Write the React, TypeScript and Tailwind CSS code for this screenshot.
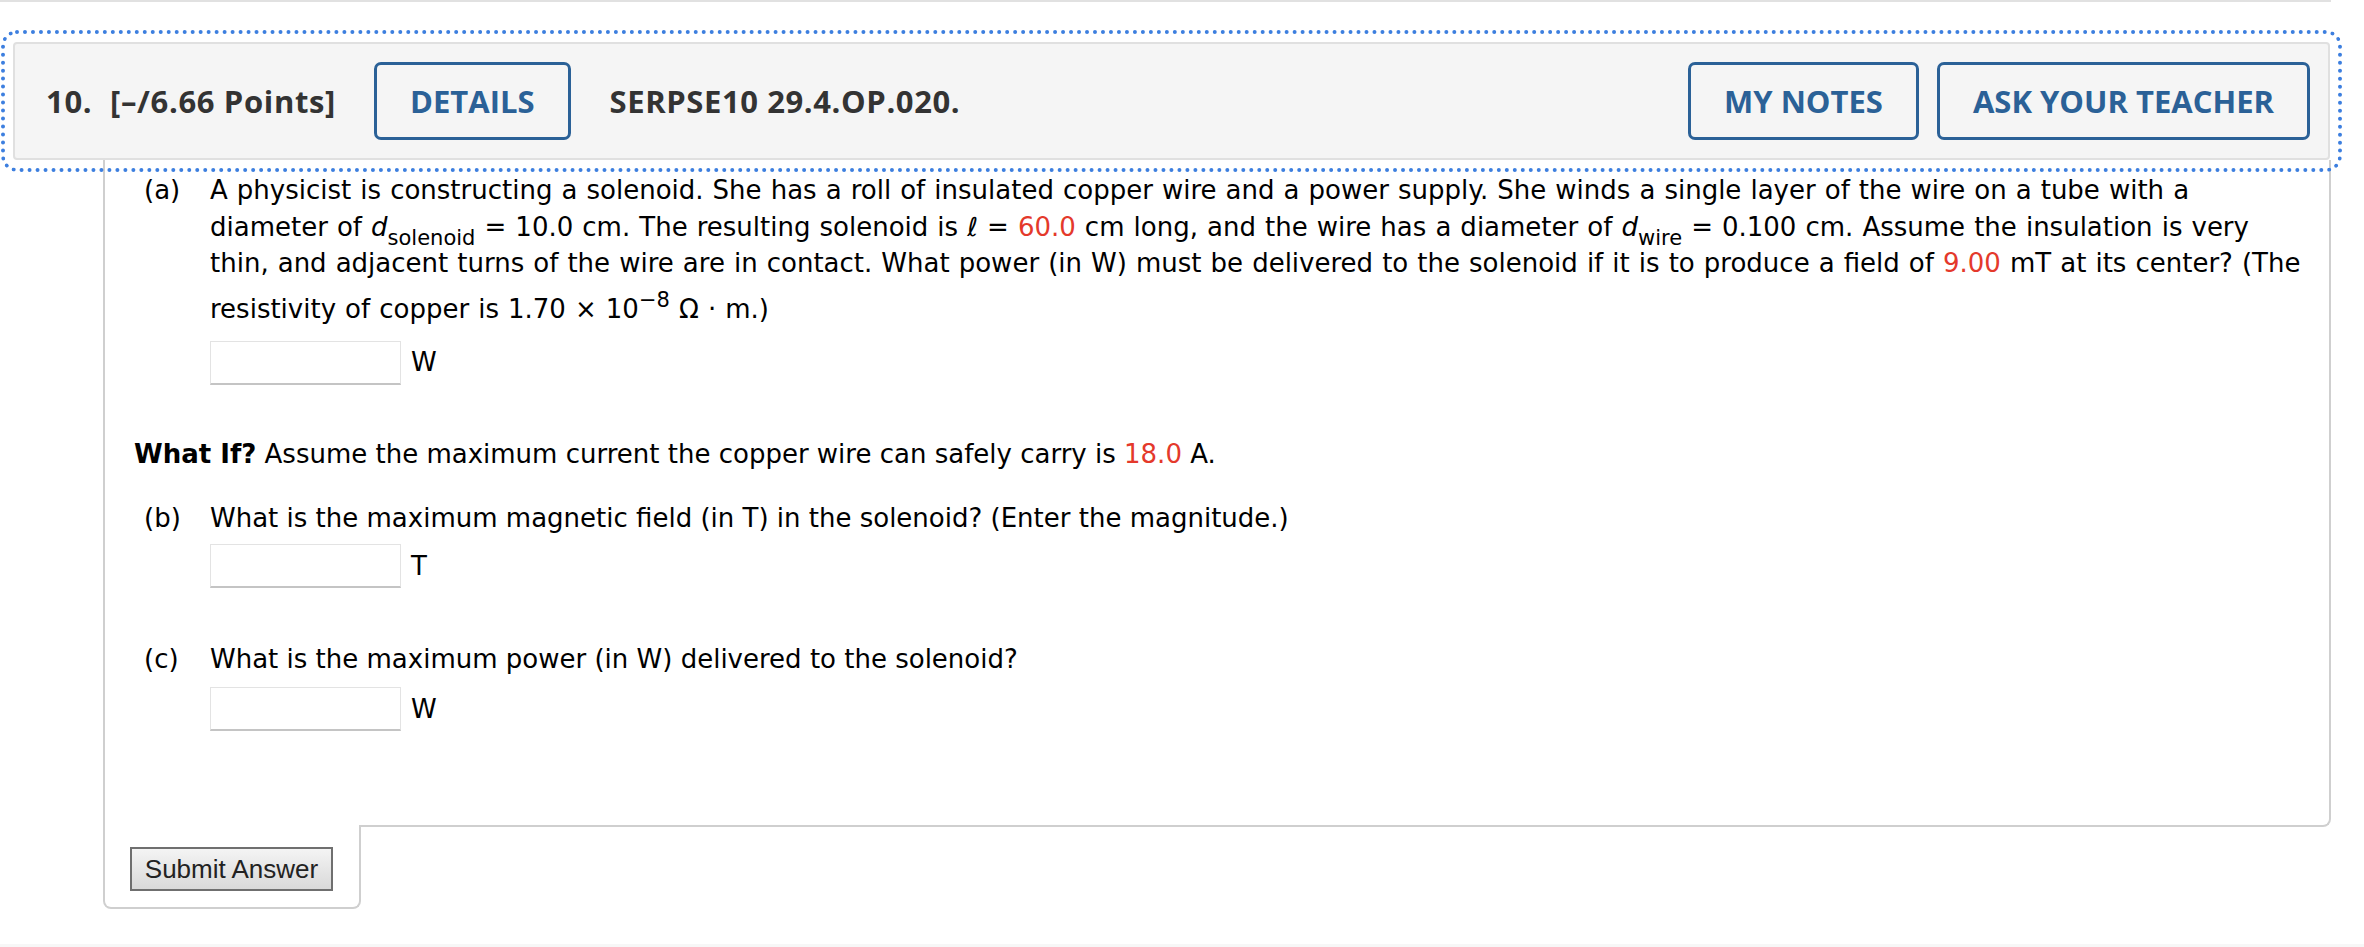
import React from "react";

function AnswerBox({ unit, className }: { unit: string; className?: string }) {
  return (
    <div className={"flex items-center " + (className ?? "")}>
      <input
        type="text"
        className="h-[44px] w-[191px] border border-[#e3e3e3] border-b-2 border-b-[#c4c4c4] bg-white"
      />
      <span className="ml-[10px]">{unit}</span>
    </div>
  );
}

function HeaderButton({ children }: { children: React.ReactNode }) {
  return (
    <button className="h-[78px] rounded-[7px] border-[3px] border-[#2b6197] px-[33px] text-[31px] font-bold text-[#2b6197]">
      {children}
    </button>
  );
}

export default function App() {
  return (
    <div className="min-h-[947px] bg-white font-['DejaVu_Sans',Verdana,sans-serif] text-[26px] leading-[36.7px] text-black">
      <div className="mr-[33px] h-[2px] bg-[#e1e1e1]" />

      {/* question header */}
      <div className="ml-[13px] mr-[34px] mt-[40px] flex h-[118px] items-center rounded-[4px] border-2 border-[#e0e0e0] bg-[#f5f5f5] pl-[31px] pr-[18px] font-['Open_Sans',sans-serif] text-[31px] font-bold text-[#333] outline-[4px] outline-offset-[8px] outline-[#3d7fdf] outline-dotted">
        <span className="w-[64px] tracking-[0.65px]">10.</span>
        <span className="w-[264px] tracking-[0.65px]">[–/6.66 Points]</span>
        <HeaderButton>DETAILS</HeaderButton>
        <span className="ml-[39px] tracking-[0.6px]">SERPSE10 29.4.OP.020.</span>
        <div className="ml-auto flex gap-[18px]">
          <HeaderButton>MY NOTES</HeaderButton>
          <HeaderButton>ASK YOUR TEACHER</HeaderButton>
        </div>
      </div>

      {/* question body */}
      <div className="ml-[103px] mr-[33px]">
        <div className="rounded-br-[8px] border-x-2 border-b-2 border-[#cfcfcf] pb-[94px] pl-[29px] pr-[23px] pt-[12px]">
          <div className="flex pl-[10px]">
            <div className="w-[66px] shrink-0">(a)</div>
            <div>
              <p className="whitespace-nowrap [word-spacing:0.8px]">
                A physicist is constructing a solenoid. She has a roll of insulated copper wire and a power supply. She winds a single layer of the wire on a tube with a
                <br />
                diameter of <i>d</i>
                <sub className="-bottom-[9px] text-[21px]">solenoid</sub> = 10.0 cm. The resulting solenoid is ℓ ={" "}
                <span className="text-[#e4392b]">60.0</span> cm long, and the wire has a diameter of <i>d</i>
                <sub className="-bottom-[9px] text-[21px]">wire</sub> = 0.100 cm. Assume the insulation is very
                <br />
                thin, and adjacent turns of the wire are in contact. What power (in W) must be delivered to the solenoid if it is to produce a field of{" "}
                <span className="text-[#e4392b]">9.00</span> mT at its center? (The
                <br />
                resistivity of copper is 1.70 × 10
                <sup className="top-0 align-[11px] text-[21px] leading-[36.7px]">−8</sup> Ω · m.)
              </p>
              <AnswerBox unit="W" className="mt-[13px]" />
            </div>
          </div>

          <p className="mt-[51px]">
            <b>What If?</b> Assume the maximum current the copper wire can safely carry is{" "}
            <span className="text-[#e4392b]">18.0</span> A.
          </p>

          <div className="mt-[27px] flex pl-[10px]">
            <div className="w-[66px] shrink-0">(b)</div>
            <div>
              <p>What is the maximum magnetic field (in T) in the solenoid? (Enter the magnitude.)</p>
              <AnswerBox unit="T" className="mt-[8px]" />
            </div>
          </div>

          <div className="mt-[53px] flex pl-[10px]">
            <div className="w-[66px] shrink-0">(c)</div>
            <div>
              <p>What is the maximum power (in W) delivered to the solenoid?</p>
              <AnswerBox unit="W" className="mt-[9px]" />
            </div>
          </div>
        </div>

        <div className="relative -mt-[2px] w-[258px] rounded-b-[8px] border-x-2 border-b-2 border-[#cfcfcf] bg-white pb-[16px] pl-[25px] pt-[22px]">
          <button className="h-[44px] w-[203px] border-2 border-[#6f6f6f] bg-gradient-to-b from-[#f4f4f4] to-[#d9d9d9] font-['Liberation_Sans',Arial,sans-serif] text-[26px] leading-none text-[#222]">
            Submit Answer
          </button>
        </div>
      </div>

      <div className="mt-[35px] h-[4px] bg-[#f7f7f7]" />
    </div>
  );
}
